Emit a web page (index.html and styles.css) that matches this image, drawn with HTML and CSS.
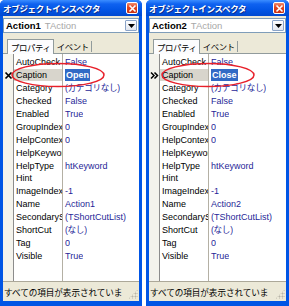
FILE: index.html
```html
<!DOCTYPE html>
<html>
<head>
<meta charset="utf-8">
<link rel="stylesheet" href="styles.css">
</head>
<body>
<div class="win left">
  <div class="title"><span class="ttext">オブジェクトインスペクタ</span><span class="close"><svg width="9" height="9" viewBox="0 0 9 9"><path d="M1.5 1.5 L7.5 7.5 M7.5 1.5 L1.5 7.5" stroke="#fff" stroke-width="1.6"/></svg></span></div>
  <div class="client">
    <div class="combo"><span class="cname">Action1</span><span class="ctype">TAction</span><span class="dd"><svg width="7" height="4" viewBox="0 0 7 4"><path d="M0 0 H7 L3.5 4 Z" fill="#000"/></svg></span></div>
    <div class="tabs"><span class="tab sel">プロパティ</span><span class="tab">イベント</span><span class="tsep"></span></div>
    <div class="grid">
      <div class="row"><span class="g"></span><span class="n">AutoCheck</span><span class="v">False</span></div>
      <div class="row"><span class="g"><svg width="9" height="9" viewBox="0 0 9 9"><path d="M1.5 1.5 L7.5 7.5 M7.5 1.5 L1.5 7.5" stroke="#000" stroke-width="1.7"/></svg></span><span class="n cur">Caption</span><span class="v"><span class="selv">Open</span></span></div>
      <div class="row"><span class="g"></span><span class="n">Category</span><span class="v jp">(カテゴリなし)</span></div>
      <div class="row"><span class="g"></span><span class="n">Checked</span><span class="v">False</span></div>
      <div class="row"><span class="g"></span><span class="n">Enabled</span><span class="v">True</span></div>
      <div class="row"><span class="g"></span><span class="n">GroupIndex</span><span class="v">0</span></div>
      <div class="row"><span class="g"></span><span class="n">HelpContext</span><span class="v">0</span></div>
      <div class="row"><span class="g"></span><span class="n">HelpKeyword</span><span class="v"></span></div>
      <div class="row"><span class="g"></span><span class="n">HelpType</span><span class="v">htKeyword</span></div>
      <div class="row"><span class="g"></span><span class="n">Hint</span><span class="v"></span></div>
      <div class="row"><span class="g"></span><span class="n">ImageIndex</span><span class="v">-1</span></div>
      <div class="row"><span class="g"></span><span class="n">Name</span><span class="v">Action1</span></div>
      <div class="row"><span class="g"></span><span class="n">SecondaryShortCuts</span><span class="v">(TShortCutList)</span></div>
      <div class="row"><span class="g"></span><span class="n">ShortCut</span><span class="v jp">(なし)</span></div>
      <div class="row"><span class="g"></span><span class="n">Tag</span><span class="v">0</span></div>
      <div class="row"><span class="g"></span><span class="n">Visible</span><span class="v">True</span></div>
      <svg class="ring" width="96" height="26" viewBox="0 0 96 26"><ellipse cx="48" cy="13" rx="46" ry="11.5" fill="none" stroke="#E8202A" stroke-width="1.5"/></svg>
    </div>
    <div class="status"><span class="stext">すべての項目が表示されていま</span><span class="grip"></span></div>
  </div>
</div>
<div class="win right">
  <div class="title"><span class="ttext">オブジェクトインスペクタ</span><span class="close"><svg width="9" height="9" viewBox="0 0 9 9"><path d="M1.5 1.5 L7.5 7.5 M7.5 1.5 L1.5 7.5" stroke="#fff" stroke-width="1.6"/></svg></span></div>
  <div class="client">
    <div class="combo"><span class="cname">Action2</span><span class="ctype">TAction</span><span class="dd"><svg width="7" height="4" viewBox="0 0 7 4"><path d="M0 0 H7 L3.5 4 Z" fill="#000"/></svg></span></div>
    <div class="tabs"><span class="tab sel">プロパティ</span><span class="tab">イベント</span><span class="tsep"></span></div>
    <div class="grid">
      <div class="row"><span class="g"></span><span class="n">AutoCheck</span><span class="v">False</span></div>
      <div class="row"><span class="g"><svg width="9" height="9" viewBox="0 0 9 9"><path d="M1 1.5 L4 4.5 L1 7.5 M4.5 1.5 L7.5 4.5 L4.5 7.5" stroke="#000" stroke-width="1.5" fill="none"/></svg></span><span class="n cur">Caption</span><span class="v"><span class="selv">Close</span></span></div>
      <div class="row"><span class="g"></span><span class="n">Category</span><span class="v jp">(カテゴリなし)</span></div>
      <div class="row"><span class="g"></span><span class="n">Checked</span><span class="v">False</span></div>
      <div class="row"><span class="g"></span><span class="n">Enabled</span><span class="v">True</span></div>
      <div class="row"><span class="g"></span><span class="n">GroupIndex</span><span class="v">0</span></div>
      <div class="row"><span class="g"></span><span class="n">HelpContext</span><span class="v">0</span></div>
      <div class="row"><span class="g"></span><span class="n">HelpKeyword</span><span class="v"></span></div>
      <div class="row"><span class="g"></span><span class="n">HelpType</span><span class="v">htKeyword</span></div>
      <div class="row"><span class="g"></span><span class="n">Hint</span><span class="v"></span></div>
      <div class="row"><span class="g"></span><span class="n">ImageIndex</span><span class="v">-1</span></div>
      <div class="row"><span class="g"></span><span class="n">Name</span><span class="v">Action2</span></div>
      <div class="row"><span class="g"></span><span class="n">SecondaryShortCuts</span><span class="v">(TShortCutList)</span></div>
      <div class="row"><span class="g"></span><span class="n">ShortCut</span><span class="v jp">(なし)</span></div>
      <div class="row"><span class="g"></span><span class="n">Tag</span><span class="v">0</span></div>
      <div class="row"><span class="g"></span><span class="n">Visible</span><span class="v">True</span></div>
      <svg class="ring" width="96" height="26" viewBox="0 0 96 26"><ellipse cx="48" cy="13" rx="46" ry="11.5" fill="none" stroke="#E8202A" stroke-width="1.5"/></svg>
    </div>
    <div class="status"><span class="stext">すべての項目が表示されていま</span><span class="grip"></span></div>
  </div>
</div>
</body>
</html>
```

FILE: styles.css
```css
html, body {
  margin: 0;
  padding: 0;
}
body {
  width: 289px;
  height: 306px;
  overflow: hidden;
  display: flex;
  gap: 4px;
  background: #fff;
  font-family: "Liberation Sans", "Noto Sans CJK JP", sans-serif;
  font-size: 9px;
  color: #000;
}
.win {
  width: 142px;
  height: 306px;
  box-sizing: border-box;
  padding: 0 3px 5px;
  background: #0055E5;
  display: flex;
  flex-direction: column;
  border-radius: 5px 5px 0 0;
  flex: none;
}
.win.right {
  width: 143px;
}
.title {
  height: 16px;
  margin: 0 -3px;
  padding: 0 3px 0 3px;
  display: flex;
  align-items: center;
  justify-content: space-between;
  background: linear-gradient(#3B8DFF 0%, #0F62F0 25%, #0356E6 60%, #0049D0 100%);
  border-radius: 5px 5px 0 0;
  flex: none;
}
.ttext {
  color: #fff;
  font-family: "Noto Sans CJK JP", sans-serif;
  font-weight: bold;
  font-size: 8.5px;
  letter-spacing: -0.3px;
  line-height: 16px;
  text-shadow: 1px 1px 0 #0A2E8C;
}
.close {
  width: 12px;
  height: 12px;
  box-sizing: border-box;
  border: 1px solid #fff;
  border-radius: 2px;
  background: linear-gradient(#F08A6C, #E0441E 45%, #C83214);
  display: flex;
  align-items: center;
  justify-content: center;
  margin-right: 1px;
}
.client {
  flex: 1;
  background: #ECE9D8;
  display: flex;
  flex-direction: column;
  min-height: 0;
}
.combo {
  margin-top: 2px;
  height: 15px;
  box-sizing: border-box;
  background: #fff;
  border: 1px solid #7F9DB9;
  display: flex;
  align-items: center;
  padding-left: 2px;
  flex: none;
}
.cname {
  font-weight: bold;
  font-size: 9.5px;
}
.ctype {
  color: #A8A8A8;
  margin-left: 4px;
  font-size: 9.5px;
}
.dd {
  margin-left: auto;
  margin-right: 1px;
  width: 12px;
  height: 11px;
  box-sizing: border-box;
  border: 1px solid #8BA4C8;
  border-radius: 1px;
  background: linear-gradient(#FFFFFF, #E2E6EE);
  display: flex;
  align-items: center;
  justify-content: center;
}
.tabs {
  margin-top: 5px;
  height: 15px;
  display: flex;
  align-items: flex-end;
  padding-left: 4px;
  border-bottom: 1px solid #919B9C;
  font-family: "Noto Sans CJK JP", sans-serif;
  font-size: 8.4px;
  letter-spacing: -0.35px;
  flex: none;
}
.tab {
  height: 13px;
  line-height: 13px;
  padding: 0 2px 0 3px;
}
.tab.sel {
  height: 15px;
  background: #FCFCFE;
  border: 1px solid #919B9C;
  border-bottom: none;
  box-sizing: border-box;
  line-height: 14px;
  margin-bottom: -1px;
}
.tsep {
  width: 1px;
  height: 11px;
  background: #919B9C;
  margin-bottom: 1px;
}
.grid {
  flex: 1;
  position: relative;
  padding-top: 2px;
  background: linear-gradient(to right, #F4F3EC 0 10px, #8C8C8C 10px 11px, #fff 11px 59px, #B4B0A4 59px 60px, #fff 60px);
  overflow: hidden;
}
.row {
  height: 12.9px;
  display: flex;
  align-items: center;
  line-height: 12px;
  white-space: nowrap;
}
.g {
  width: 10px;
  height: 12px;
  flex: none;
  display: flex;
  align-items: center;
  justify-content: center;
  margin-right: 1px;
}
.n {
  width: 46px;
  padding-left: 2px;
  flex: none;
  overflow: hidden;
  height: 12px;
}
.n.cur {
  background: #D8D5CC;
}
.v {
  margin-left: 1px;
  padding-left: 2px;
  color: #1F1F98;
  overflow: hidden;
}
.jp {
  font-size: 8.6px;
  letter-spacing: -0.3px;
}
.selv {
  background: #316AC5;
  color: #fff;
  font-weight: bold;
  padding: 0 1px;
  display: inline-block;
  line-height: 12px;
}
.ring {
  position: absolute;
  left: 7px;
  top: 8px;
}
.right .ring {
  left: 11px;
}
.status {
  height: 20px;
  box-sizing: border-box;
  border-top: 1px solid #ACA899;
  display: flex;
  align-items: center;
  padding-left: 1px;
  flex: none;
  position: relative;
}
.stext {
  font-family: "Noto Sans CJK JP", sans-serif;
  font-size: 8.6px;
  letter-spacing: -0.05px;
}
.grip {
  position: absolute;
  right: 1px;
  bottom: 2px;
  width: 10px;
  height: 10px;
  background:
    radial-gradient(circle, #B8B4A8 0.9px, transparent 1.1px) 0 0 / 3px 3px;
  clip-path: polygon(100% 0, 100% 100%, 0 100%);
}
```
